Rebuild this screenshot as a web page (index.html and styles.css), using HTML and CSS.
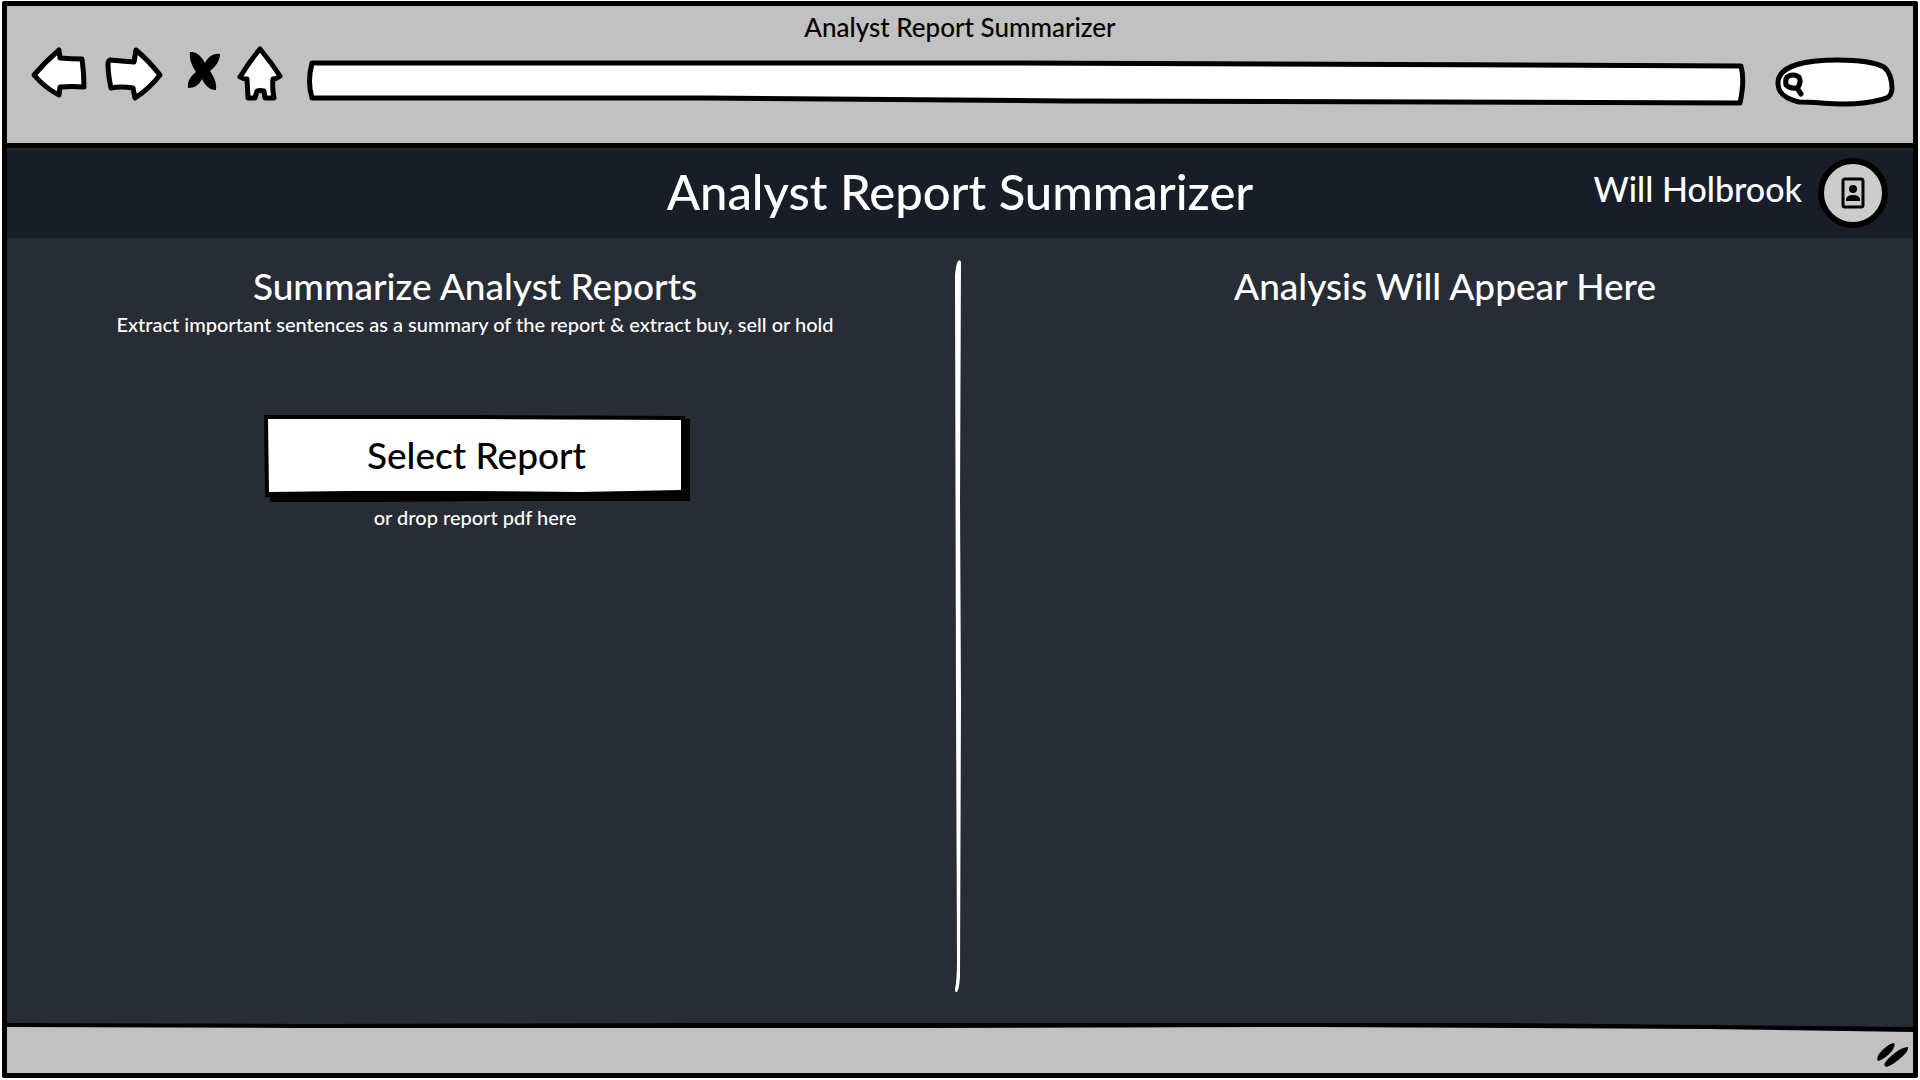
FILE: index.html
```html
<!DOCTYPE html>
<html lang="en">
<head>
<meta charset="utf-8">
<meta name="viewport" content="width=device-width, initial-scale=1">
<title>Analyst Report Summarizer</title>
<link rel="stylesheet" href="styles.css">
</head>
<body>
<div class="window">
  <div class="toolbar">
    <div class="window-title">Analyst Report Summarizer</div>
    <div class="nav">
      <button class="nav-button" type="button" aria-label="Back">
        <svg class="outline" width="62" height="62" viewBox="29 46 62 62"><path d="M34 75Q46 61 59 50L60 58Q71 59 82 59Q84 73 84 87Q72 86 60 87L59 95Q45 88 34 75Z"/></svg>
      </button>
      <button class="nav-button" type="button" aria-label="Forward">
        <svg class="outline" width="62" height="62" viewBox="103 46 62 62"><path d="M110 60Q121 61 134 62L136 50Q149 61 160 75Q149 89 135 98L133 88Q121 86 111 88Q108 74 108 64Q108 61 110 60Z"/></svg>
      </button>
      <button class="nav-button" type="button" aria-label="Stop">
        <svg width="48" height="62" viewBox="177 46 48 62"><path d="M190 52C197 51 202 57 205 63C208 57 213 53 220 54C220 61 215 67 210 71C214 77 217 83 216 90C209 90 205 85 202 79C199 85 195 88 188 88C187 81 191 76 196 72C192 66 189 59 190 52Z"/></svg>
      </button>
      <button class="nav-button" type="button" aria-label="Home">
        <svg class="outline" width="48" height="62" viewBox="237 46 48 62"><path d="M260 49Q271 62 280 76Q276 79 273 79Q272 88 274 98H265L264 91Q260 90 257 91L255 98H248L247 79Q243 79 240 77Q249 62 260 49Z"/></svg>
      </button>
      <div class="field address">
        <svg class="outline" viewBox="0 0 1440 62" preserveAspectRatio="none"><path d="M7 17L700 17L1434 20Q1438 34 1433 57L760 55L400 52L7 52Q2 36 7 17Z"/></svg>
        <input type="text" aria-label="Address">
      </div>
      <div class="field search">
        <svg class="outline" width="122" height="62" viewBox="1775 46 122 62"><path d="M1778 83C1778 66 1805 60 1838 60C1860 60 1874 62 1884 67C1891 73 1892 82 1892 89C1891 97 1888 98 1880 100C1868 103 1856 104 1845 104C1828 104 1815 102 1799 102C1786 99 1778 94 1778 83Z"/><path class="lens" d="M1787 77Q1793 73 1799 77Q1802 83 1797 88Q1790 89 1786 85Q1785 80 1787 77ZM1797 88L1801 94"/></svg>
        <input type="search" aria-label="Search">
      </div>
    </div>
  </div>
  <header class="header">
    <h1>Analyst Report Summarizer</h1>
    <div class="account">
      <span class="name">Will Holbrook</span>
      <button class="avatar" type="button" aria-label="Account">
        <svg width="24" height="32" viewBox="0 0 24 32"><rect class="card" x="2" y="2" width="20" height="28" rx="2"/><circle cx="12" cy="12" r="4"/><path d="M5 24V22Q6 18 12 18T19 22V24Z"/></svg>
      </button>
    </div>
  </header>
  <main class="content">
    <section class="panel">
      <h2>Summarize Analyst Reports</h2>
      <p>Extract important sentences as a summary of the report &amp; extract buy, sell or hold</p>
      <button class="select" type="button">
        <svg width="426" height="88" viewBox="264 415 426 88"><path d="M264 415L480 415L685 416V419H690V501L490 501L380 502L270 502V497H265Z"/><path class="face" d="M268 419L480 419L681 420V490L580 492L470 491L350 491L269 492Z"/></svg>
        <span class="label">Select Report</span>
      </button>
      <p>or drop report pdf here</p>
    </section>
    <svg class="divider" viewBox="943 260 34 732" preserveAspectRatio="none"><path d="M958 261Q960 259 961 262L960 500L961 700L960 977Q959 990 957 992Q955 993 955 989Q957 980 957 960L956 700L955 275Q956 264 958 261Z"/></svg>
    <section class="panel">
      <h2>Analysis Will Appear Here</h2>
    </section>
  </main>
  <svg class="rule" viewBox="0 0 1906 10" preserveAspectRatio="none"><path class="below" d="M0 4L1700 4L1906 7V10H0Z"/><path d="M0 0L300 1L700 0L1500 0L1906 4V9L1700 6L1300 4L900 5L300 5L0 4Z"/></svg>
  <footer class="status">
    <svg width="34" height="28" viewBox="1876 1041 34 28"><path d="M1894 1043Q1896 1045 1892 1051Q1885 1059 1878 1061Q1876 1059 1879 1054Q1887 1044 1894 1043ZM1908 1047Q1909 1050 1903 1056Q1892 1066 1886 1067Q1882 1065 1888 1059Q1900 1047 1908 1047Z"/></svg>
  </footer>
</div>
</body>
</html>
```
FILE: styles.css
```css
* {
  box-sizing: border-box;
}

body {
  margin: 0;
  padding: 1px 2px 2px;
  background: #fff;
  color: #000;
  font-family: Lato, "Noto Sans", sans-serif;
  font-size: 20px;
  font-weight: 500;
  line-height: 28px;
}

h1, h2, p {
  margin: 0;
  font-weight: 500;
}

svg {
  display: block;
}

button {
  border: 0;
  padding: 0;
  background: none;
  color: inherit;
  font: inherit;
  cursor: pointer;
}

.window {
  display: flex;
  flex-direction: column;
  min-height: calc(100vh - 3px);
  border: 5px solid #000;
  border-radius: 2px;
  background: #282c34;
}

.toolbar {
  padding: 2px 0 35px;
  border-bottom: 5px solid #000;
  background: #c1c1c1;
}

.window-title {
  font-size: 26px;
  line-height: 38px;
  text-align: center;
}

.nav {
  display: flex;
  gap: 12px;
  padding: 0 16px 0 22px;
}

.outline {
  overflow: visible;
  fill: #fff;
  stroke: #000;
  stroke-width: 5px;
  stroke-linejoin: round;
  stroke-linecap: round;
}

.outline path {
  vector-effect: non-scaling-stroke;
}

.outline .lens {
  fill: none;
}

.field {
  display: grid;
}

.field > * {
  grid-area: 1 / 1;
}

.field input {
  min-width: 0;
  border: 0;
  background: transparent;
  font: inherit;
  outline: 0;
}

.address {
  flex: 1;
  margin: 0 16px 0 8px;
}

.address svg {
  width: 100%;
  height: 62px;
}

.address input {
  padding: 0 16px;
}

.search {
  width: 122px;
}

.search input {
  padding: 0 12px 0 32px;
}

.header {
  display: grid;
  grid-template-columns: 1fr auto 1fr;
  align-items: center;
  height: 88px;
  margin-top: 2px;
  padding: 0 25px 2px;
  background: #191d28;
  color: #fff;
}

.header h1 {
  grid-column: 2;
  padding-bottom: 5px;
  font-size: 49px;
  line-height: 80px;
}

.account {
  display: flex;
  justify-content: flex-end;
  align-items: center;
  gap: 16px;
}

.name {
  padding-bottom: 8px;
  font-size: 34px;
  line-height: 48px;
}

.avatar {
  display: grid;
  place-items: center;
  width: 70px;
  height: 70px;
  border: 6px solid #000;
  border-radius: 50%;
  background: #ccc;
}

.card {
  fill: none;
  stroke: #000;
  stroke-width: 3px;
}

.content {
  display: grid;
  flex: 1;
  grid-template-columns: 1fr 34px 1fr;
  padding: 22px 0 31px;
  color: #fff;
}

.panel {
  display: flex;
  flex-direction: column;
  align-items: center;
  padding-top: 2px;
  text-align: center;
}

.panel h2 {
  font-size: 37px;
  line-height: 48px;
}

.divider {
  width: 34px;
  height: 100%;
  fill: #fff;
}

.select {
  display: grid;
  place-items: center;
  margin: 77px 0 0 3px;
  color: #000;
  font-size: 37px;
  line-height: 48px;
}

.select > * {
  grid-area: 1 / 1;
}

.label {
  padding-bottom: 8px;
}

.face {
  fill: #fff;
}

.rule {
  width: 100%;
  height: 10px;
}

.below {
  fill: #c1c1c1;
}

.status {
  display: flex;
  justify-content: flex-end;
  align-items: flex-end;
  height: 40px;
  padding: 0 3px 4px 0;
  background: #c1c1c1;
}
```
